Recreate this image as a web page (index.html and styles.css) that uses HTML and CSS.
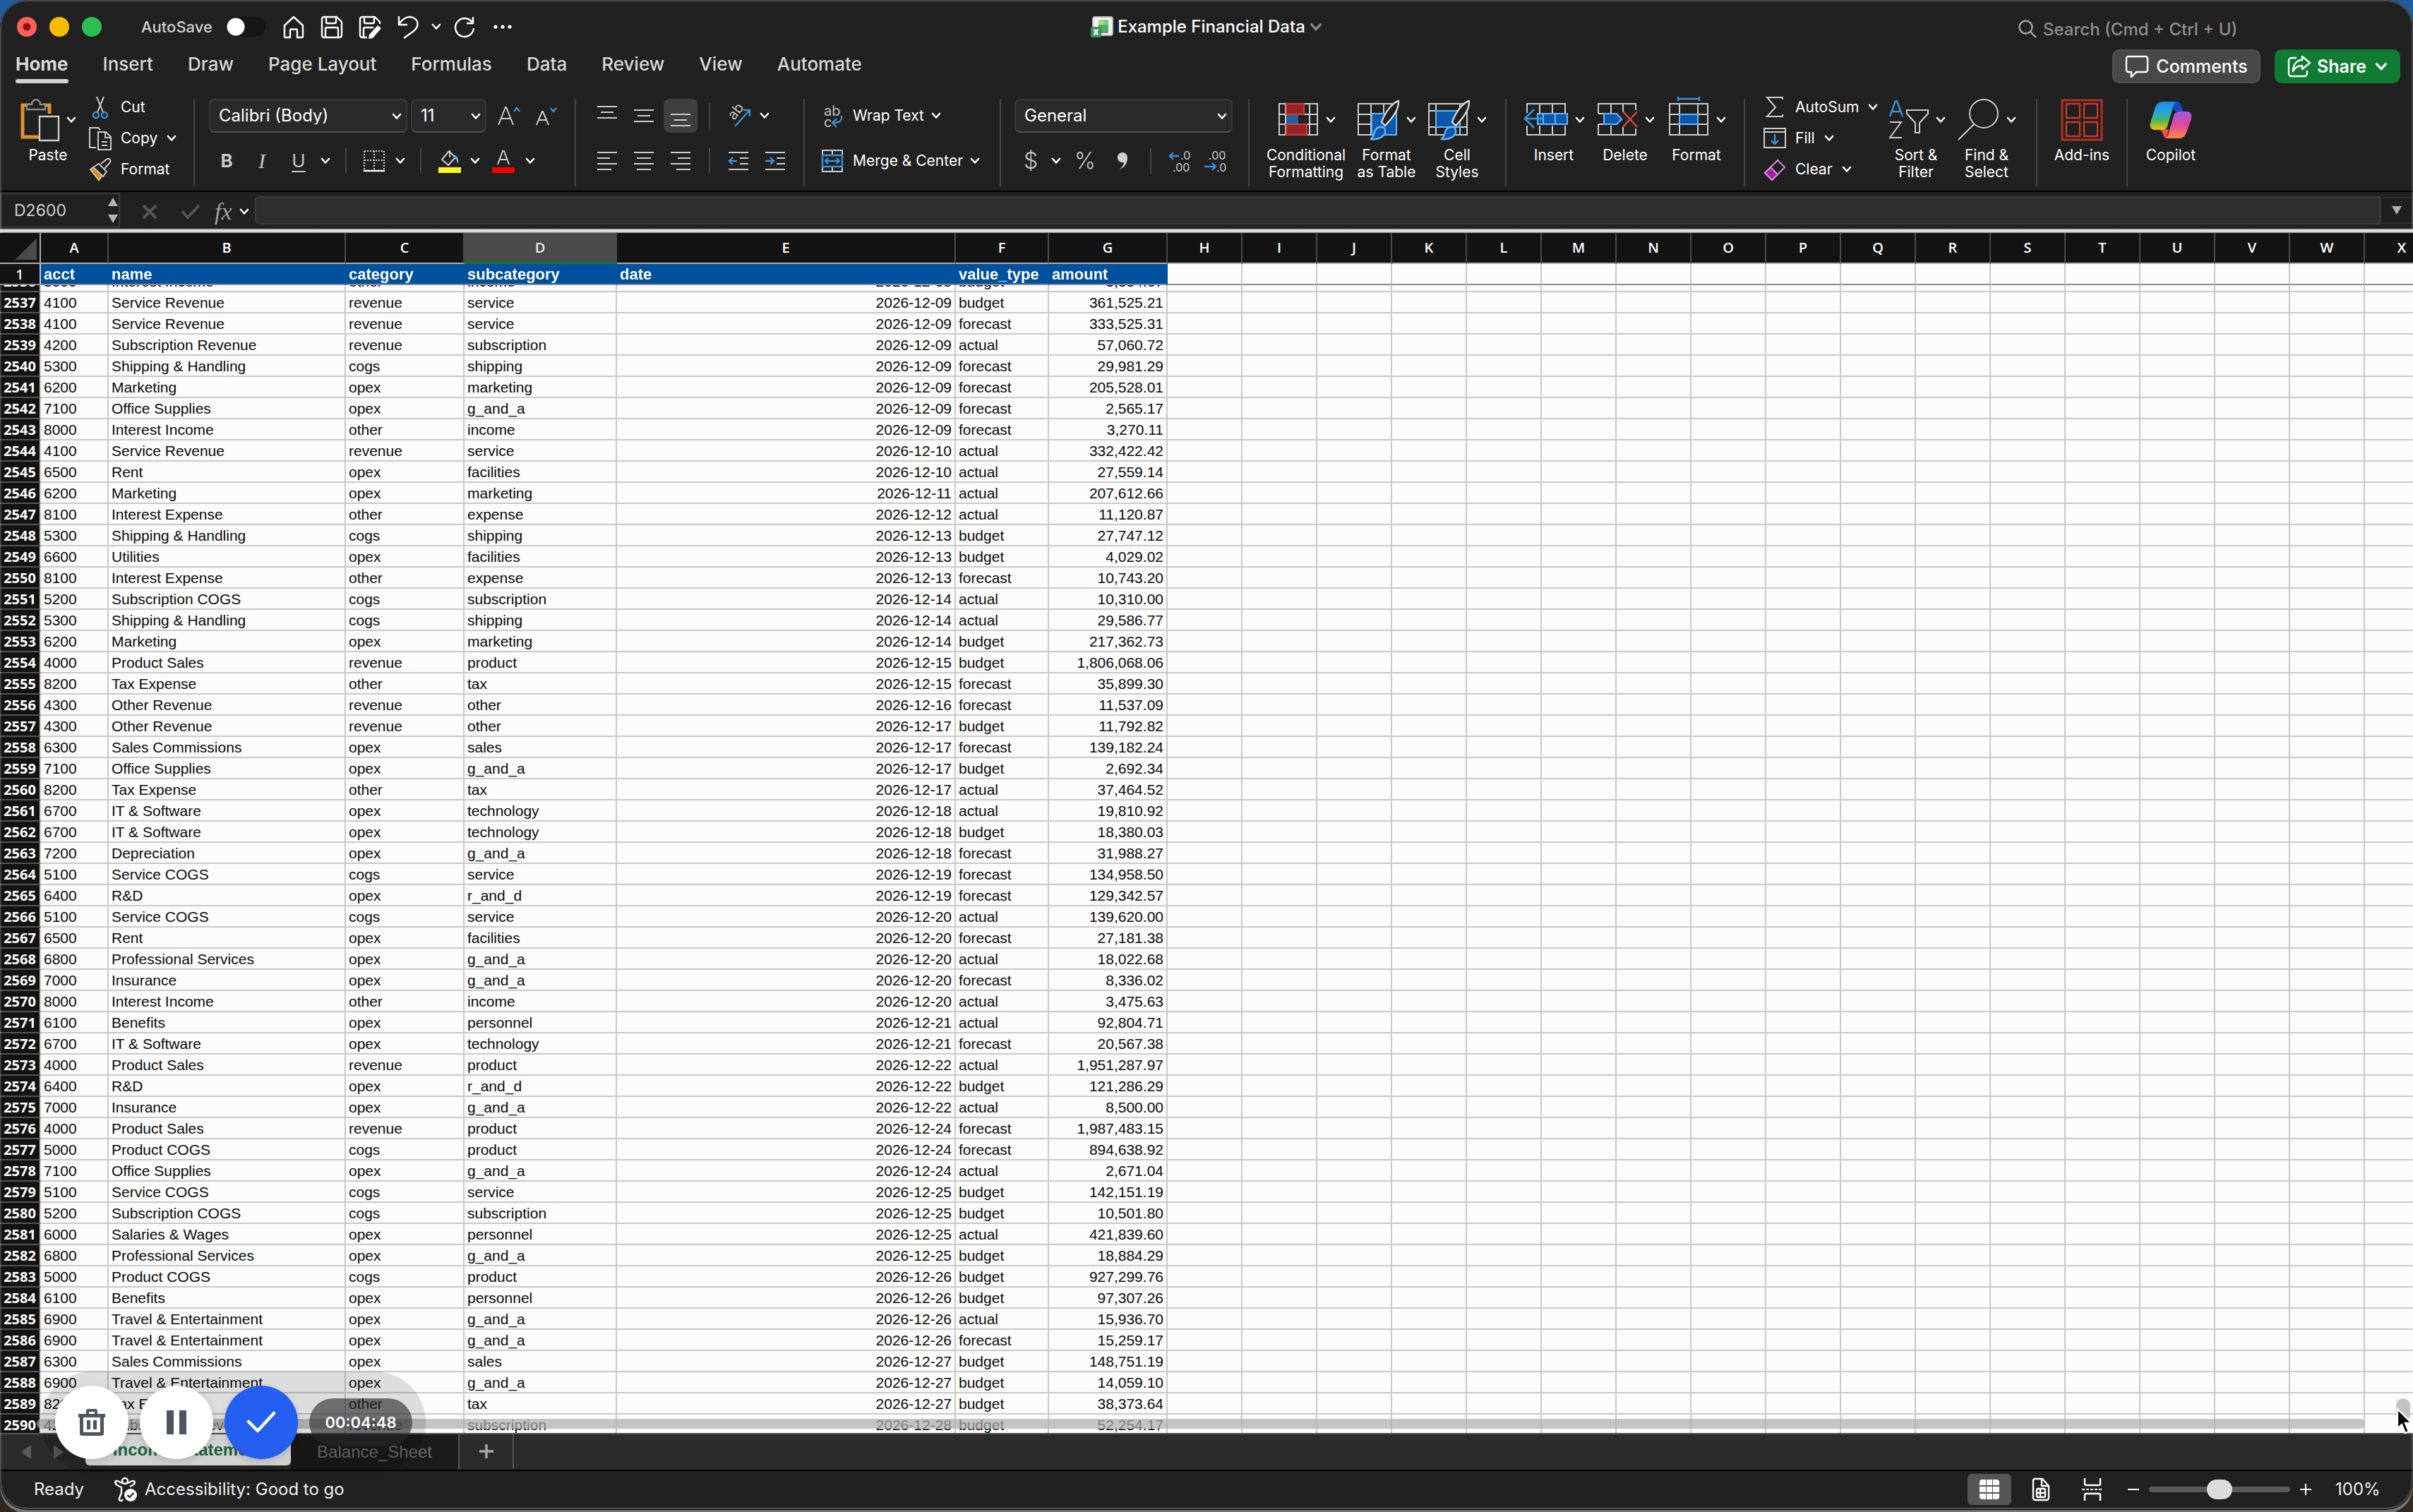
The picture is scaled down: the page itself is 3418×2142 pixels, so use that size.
FILE: index.html
```html
<!DOCTYPE html>
<html lang="en">
<head>
<meta charset="utf-8">
<title>Example Financial Data</title>
<link rel="stylesheet" href="styles.css">
</head>
<body>
<svg class="defs" aria-hidden="true">
  <symbol id="chev" viewBox="0 0 14 10"><path d="M2 2l5 5.500 5-5.500" fill="none" stroke="currentColor" stroke-width="2.600" stroke-linecap="round" stroke-linejoin="round"/></symbol>
  <symbol id="brush" viewBox="0 0 46 60">
    <path d="M44 2c-10 3-20 18-24 30l5 5c8-8 20-22 19-35z" fill="#212121" stroke="#d6d6d6" stroke-width="2.400"/>
    <path d="M4 56c6-2 4-9 8-14 4-5 12-4 13 1 2 8-9 15-21 13z" fill="#0a58ad" stroke="#6db3f2" stroke-width="2.400"/>
  </symbol>
</svg>
<div class="window">
  <header class="titlebar">
    <div class="title-left">
      <div class="lights">
        <button class="light red" aria-label="Close"></button>
        <button class="light yellow" aria-label="Minimize"></button>
        <button class="light green" aria-label="Zoom"></button>
      </div>
      <label class="autosave"><span>AutoSave</span><input type="checkbox"></label>
      <div class="quick">
        <button aria-label="Home"><svg width="32" height="34" viewBox="0 0 32 34"><path d="M3 15L16 3l13 12v15.500a1.500 1.500 0 0 1-1.500 1.500H21V21.500a1 1 0 0 0-1-1h-8a1 1 0 0 0-1 1V32H4.500A1.500 1.500 0 0 1 3 30.500z" class="w"/></svg></button>
        <button aria-label="Save"><svg width="32" height="34" viewBox="0 0 32 34"><path d="M2 6a3 3 0 0 1 3-3h18l7 7v19a3 3 0 0 1-3 3H5a3 3 0 0 1-3-3zM8 3v7a2 2 0 0 0 2 2h10a2 2 0 0 0 2-2V3M7 32V20a2 2 0 0 1 2-2h14a2 2 0 0 1 2 2v12" class="w"/></svg></button>
        <button aria-label="Save a copy"><svg width="32" height="34" viewBox="0 0 32 34"><path d="M12 32H5a3 3 0 0 1-3-3V6a3 3 0 0 1 3-3h18l7 7v3M8 3v7a2 2 0 0 0 2 2h10a2 2 0 0 0 2-2V3M7 32V20a2 2 0 0 1 2-2h12" class="w"/><path d="M27 15l5 4-12 14-6 1 1-6z" fill="#fff"/></svg></button>
        <button aria-label="Undo"><svg width="32" height="34" viewBox="0 0 32 34"><path d="M3 2v12h12M3 14C8 5 16 1 23 4c9 4 8 13 1 19L10 33" class="w"/></svg></button>
        <button aria-label="Undo options" class="slim"><svg class="chev"><use href="#chev"/></svg></button>
        <button aria-label="Redo"><svg width="32" height="34" viewBox="0 0 32 34"><path d="M28 3v9h-9M27 11A13 13 0 1 0 29 19" class="w"/></svg></button>
        <button aria-label="More"><svg width="32" height="34" viewBox="0 0 32 34"><g fill="#fff"><circle cx="6" cy="17" r="2.600"/><circle cx="16" cy="17" r="2.600"/><circle cx="26" cy="17" r="2.600"/></g></svg></button>
      </div>
    </div>
    <button class="doc-title">
      <svg width="32" height="30" viewBox="0 0 32 30"><rect x="3" y="1" width="28" height="26" rx="3" fill="#f4f4f4" stroke="#bdbdbd" stroke-width="2"/><rect x="11" y="5" width="14" height="19" fill="#4fae6c"/><rect x="11" y="5" width="7" height="7" fill="#a5e07b"/><rect x="18" y="5" width="7" height="7" fill="#6fd08a"/><rect x="0" y="15" width="15" height="15" rx="2" fill="#3f8f60"/><path d="M4.500 18.500l6 8M10.500 18.500l-6 8" stroke="#fff" stroke-width="2.400"/></svg>
      <span>Example Financial Data</span>
      <svg class="chev dim big-chev"><use href="#chev"/></svg>
    </button>
    <div class="title-right">
      <label class="search">
        <svg width="28" height="28" viewBox="0 0 28 28"><circle cx="11.500" cy="11.500" r="9" fill="none" stroke="#a8a8a8" stroke-width="2.400"/><path d="M18 18l8 8" stroke="#a8a8a8" stroke-width="2.400"/></svg>
        <input type="text" placeholder="Search (Cmd + Ctrl + U)" aria-label="Search">
      </label>
    </div>
  </header>

  <div class="tabrow">
    <nav class="tabs">
      <a href="#" class="on">Home</a><a href="#">Insert</a><a href="#">Draw</a><a href="#">Page Layout</a><a href="#">Formulas</a><a href="#">Data</a><a href="#">Review</a><a href="#">View</a><a href="#">Automate</a>
    </nav>
    <div class="actions">
      <button class="comments"><svg width="34" height="32" viewBox="0 0 34 32"><path d="M5 2h24a3 3 0 0 1 3 3v16a3 3 0 0 1-3 3H16l-7 7v-7H5a3 3 0 0 1-3-3V5a3 3 0 0 1 3-3z" class="w"/></svg>Comments</button>
      <button class="share"><svg width="34" height="32" viewBox="0 0 34 32"><path d="M13 4H6a4 4 0 0 0-4 4v18a4 4 0 0 0 4 4h18a4 4 0 0 0 4-4v-4" class="w"/><path d="M21 2l11 9-11 9v-5c-6 0-10 2-13 8 0-9 5-16 13-16z" class="w"/></svg>Share<svg class="chev big-chev"><use href="#chev"/></svg></button>
    </div>
  </div>

  <div class="ribbon">
    <section class="group g1">
      <button class="big">
        <span class="pic"><svg width="56" height="60" viewBox="0 0 56 60"><path d="M14 9H3v45h23M32 9h9v12" fill="none" stroke="#e0912f" stroke-width="5"/><path d="M9 15V8h7c0-9 12-9 12 0h7v7z" fill="#212121" stroke="#8c8c8c" stroke-width="2.400"/><path d="M27 25h27v34H27z" fill="#212121" stroke="#cfcfcf" stroke-width="2.400"/></svg><svg class="chev"><use href="#chev"/></svg></span>
        <span>Paste</span>
      </button>
      <div class="list">
        <button><svg width="32" height="34" viewBox="0 0 32 34"><path d="M11 2l9 22M21 2l-9 22" stroke="#c8c8c8" stroke-width="2" fill="none"/><circle cx="10" cy="28" r="4" class="b"/><circle cx="22" cy="28" r="4" class="b"/></svg>Cut</button>
        <button><svg width="32" height="34" viewBox="0 0 32 34"><path d="M10 30H1V2h12l3 3" class="g"/><path d="M13 8h11l7 7v18H13zM23 8v8h8M18 22h8M18 27h8" class="g"/></svg>Copy<svg class="chev"><use href="#chev"/></svg></button>
        <button><svg width="32" height="34" viewBox="0 0 32 34"><path d="M2 17l11-7 10 10-9 12z" fill="#d9872b" stroke="#f0c878" stroke-width="2"/><path d="M6 14l8-5 11 11-5 7z" fill="#212121" stroke="#c8c8c8" stroke-width="2"/><path d="M17 9l9-7c4-1 6 3 3 6l-7 8" fill="#212121" stroke="#c8c8c8" stroke-width="2"/></svg>Format</button>
      </div>
    </section>

    <section class="group g2">
      <div class="line font-line">
        <span class="drop family"><select aria-label="Font"><option>Calibri (Body)</option></select><svg class="chev"><use href="#chev"/></svg></span>
        <span class="drop size"><select aria-label="Font size"><option>11</option></select><svg class="chev"><use href="#chev"/></svg></span>
        <button aria-label="Increase font size" class="wide"><svg width="36" height="30" viewBox="0 0 36 30"><path d="M2 28L12 3h1l10 25M6 19h13" class="g"/><path d="M24 9l4-5 4 5" class="b"/></svg></button>
        <button aria-label="Decrease font size" class="wide"><svg width="36" height="30" viewBox="0 0 36 30"><path d="M4 28L12 9h1l8 19M7 21h11" class="g"/><path d="M24 4l4 5 4-5" class="b"/></svg></button>
      </div>
      <div class="line cells c2">
        <button class="glyph bold">B</button>
        <button class="glyph ital">I</button>
        <button class="glyph under">U</button>
        <button aria-label="Underline options"><svg class="chev"><use href="#chev"/></svg></button>
        <i class="sep"></i>
        <button aria-label="Borders"><svg width="32" height="32" viewBox="0 0 32 32"><path d="M2 2h28v26M2 2v26M16 2v26M2 15h28" fill="none" stroke="#d0d0d0" stroke-width="2" stroke-dasharray="2 2"/><path d="M1 30h30" stroke="#fff" stroke-width="2.400"/></svg></button>
        <button aria-label="Border options"><svg class="chev"><use href="#chev"/></svg></button>
        <i class="sep"></i>
        <button aria-label="Fill color"><svg width="34" height="34" viewBox="0 0 34 34"><path d="M17 2v10M16 3L6 15l9 8 10-11-9-9" class="g"/><path d="M24 9c5 1 6 7 5 12-2-2-2-6-5-8" fill="#6aa9dc"/><path d="M1 26h32v8H1z" fill="#fdfd1c"/></svg></button>
        <button aria-label="Fill color options"><svg class="chev"><use href="#chev"/></svg></button>
        <button aria-label="Font color"><svg width="34" height="34" viewBox="0 0 34 34"><path d="M9 22l7-19h2l7 19M11 15h12" class="g"/><path d="M1 26h32v8H1z" fill="#f60000"/></svg></button>
        <button aria-label="Font color options"><svg class="chev"><use href="#chev"/></svg></button>
      </div>
    </section>

    <section class="group g3">
      <div class="line cells c3">
        <button aria-label="Top align"><svg width="28" height="30" viewBox="0 0 28 30"><path d="M0 2h28M5 10h18M0 18h28" class="g"/></svg></button>
        <button aria-label="Middle align"><svg width="28" height="30" viewBox="0 0 28 30"><path d="M0 7h28M5 15h18M0 23h28" class="g"/></svg></button>
        <button aria-label="Bottom align" class="pressed"><svg width="28" height="30" viewBox="0 0 28 30"><path d="M0 13h28M5 21h18M0 29h28" class="g"/></svg></button>
        <i class="sep"></i>
        <button aria-label="Orientation"><svg width="34" height="34" viewBox="0 0 34 34"><text x="0" y="0" transform="translate(11 24) rotate(-52)" class="mini">ab</text><path d="M12 32L32 10M24 9h9v9" class="b"/></svg></button>
        <button aria-label="Orientation options" class="start"><svg class="chev"><use href="#chev"/></svg></button>
      </div>
      <div class="line cells c3">
        <button aria-label="Align left"><svg width="28" height="28" viewBox="0 0 28 28"><path d="M0 2h28M0 10h18M0 18h28M0 26h20" class="g"/></svg></button>
        <button aria-label="Center"><svg width="28" height="28" viewBox="0 0 28 28"><path d="M0 2h28M4 10h20M0 18h28M4 26h20" class="g"/></svg></button>
        <button aria-label="Align right"><svg width="28" height="28" viewBox="0 0 28 28"><path d="M0 2h28M10 10h18M0 18h28M8 26h20" class="g"/></svg></button>
        <i class="sep"></i>
        <button aria-label="Decrease indent"><svg width="28" height="28" viewBox="0 0 28 28"><path d="M0 2h28M16 10h12M16 18h12M0 26h28" class="g"/><path d="M12 14H1M6 9l-5 5 5 5" class="b"/></svg></button>
        <button aria-label="Increase indent"><svg width="28" height="28" viewBox="0 0 28 28"><path d="M0 2h28M16 10h12M16 18h12M0 26h28" class="g"/><path d="M0 14h11M7 9l5 5-5 5" class="b"/></svg></button>
      </div>
    </section>

    <section class="group g4">
      <div class="line"><button class="text"><svg width="30" height="34" viewBox="0 0 30 34"><text x="3" y="17" class="mini">ab</text><text x="3" y="33" class="mini">c</text><path d="M28 17c1 8-4 10-13 10M21 21l-6 6 6 6" class="b"/></svg>Wrap Text<svg class="chev"><use href="#chev"/></svg></button></div>
      <div class="line"><button class="text"><svg width="30" height="32" viewBox="0 0 30 32"><path d="M1 8V1h28v7M15 1v7M1 24v7h28v-7M15 24v7" class="g"/><path d="M1 8h28v16H1zM5 16h20M9 12l-4 4 4 4M21 12l4 4-4 4" class="b"/></svg>Merge &amp; Center<svg class="chev"><use href="#chev"/></svg></button></div>
    </section>

    <section class="group g5">
      <div class="line"><span class="drop general"><select aria-label="Number format"><option>General</option></select><svg class="chev"><use href="#chev"/></svg></span></div>
      <div class="line cells c5">
        <button class="glyph num-tool">$</button>
        <button aria-label="Currency options"><svg class="chev"><use href="#chev"/></svg></button>
        <button class="glyph num-tool">%</button>
        <button aria-label="Comma style"><svg width="16" height="26" viewBox="0 0 16 26"><path d="M8 1c5 0 7 4 7 8 0 7-4 13-11 16 4-4 6-7 6-10-5 1-9-2-9-7 0-4 3-7 7-7z" fill="#d0d0d0"/></svg></button>
        <i class="sep"></i>
        <button aria-label="Increase decimal"><svg width="34" height="34" viewBox="0 0 34 34"><text x="18" y="15" class="dec">.0</text><text x="7" y="32" class="dec">.00</text><path d="M16 10H3M8 5l-5 5 5 5" class="b"/></svg></button>
        <button aria-label="Decrease decimal"><svg width="34" height="34" viewBox="0 0 34 34"><text x="7" y="15" class="dec">.00</text><text x="18" y="32" class="dec">.0</text><path d="M1 25h15M12 20l5 5-5 5" class="b"/></svg></button>
      </div>
    </section>

    <section class="group g6">
      <button class="big"><span class="pic"><svg width="60" height="60" viewBox="0 0 60 60"><path d="M3 7h54v44H3zM12 7v44M46 7v44M3 22h54M3 36h54" class="g"/><path d="M13 7h25v15H13zM13 36h29v15H13z" fill="#982324" stroke="#d0413f" stroke-width="2"/><path d="M13 23h17v12H13z" fill="#1f61a3"/></svg><svg class="chev"><use href="#chev"/></svg></span><span>Conditional<br>Formatting</span></button>
      <button class="big"><span class="pic"><svg width="60" height="60" viewBox="0 0 60 60"><path d="M1 7h54v44H1zM19 7v44M37 7v44M1 22h54M1 36h54" class="g"/><path d="M20 21h35v30H20z" fill="#0a58ad" stroke="#6db3f2" stroke-width="2"/><use href="#brush" x="14" y="1" width="46" height="60"/></svg><svg class="chev"><use href="#chev"/></svg></span><span>Format<br>as Table</span></button>
      <button class="big"><span class="pic"><svg width="60" height="60" viewBox="0 0 60 60"><path d="M1 7h54v44H1zM11 7v44M45 7v44M1 17h54M1 40h54" class="g"/><path d="M11 17h34v23H11z" fill="#0a58ad" stroke="#6db3f2" stroke-width="2"/><use href="#brush" x="14" y="1" width="46" height="60"/></svg><svg class="chev"><use href="#chev"/></svg></span><span>Cell<br>Styles</span></button>
    </section>

    <section class="group g7">
      <button class="big"><span class="pic"><svg width="64" height="60" viewBox="0 0 64 60"><path d="M5 20V7h54v14M5 38v13h54V38M23 7v14M41 7v14M23 38v13M41 38v13" class="g"/><path d="M20 21h42v15H20zM28 21v15M45 21v15" fill="#0a58ad" stroke="#6db3f2" stroke-width="2"/><path d="M28 28H3M15 15L2 28l13 13" fill="none" stroke="#3b92d8" stroke-width="2.600"/></svg><svg class="chev"><use href="#chev"/></svg></span><span>Insert</span></button>
      <button class="big"><span class="pic"><svg width="60" height="60" viewBox="0 0 60 60"><path d="M3 21V7h53v9M3 21h8M3 36v15h53v-9M3 36h8M21 7v14M38 7v12M21 38v13M38 40v11" class="g"/><path d="M11 21h18l7 8-7 7H11z" fill="#0a58ad" stroke="#6db3f2" stroke-width="2"/><path d="M38 18l20 22M58 18L38 40" stroke="#d9443f" stroke-width="2.600"/></svg><svg class="chev"><use href="#chev"/></svg></span><span>Delete</span></button>
      <button class="big"><span class="pic"><svg width="60" height="68" viewBox="0 0 60 68"><path d="M3 11h54v44H3zM17 11v44M43 11v44M3 26h54M3 40h54" class="g"/><path d="M17 26h26v14H17z" fill="#0a58ad" stroke="#6db3f2" stroke-width="2"/><path d="M15 4h30M15 1v6M45 1v6" class="b"/></svg><svg class="chev"><use href="#chev"/></svg></span><span>Format</span></button>
    </section>

    <section class="group g8">
      <div class="list">
        <button><svg width="32" height="34" viewBox="0 0 32 34"><path d="M27 6V3H5l12 14L5 30h22v-3" class="g"/></svg>AutoSum<svg class="chev"><use href="#chev"/></svg></button>
        <button><svg width="32" height="34" viewBox="0 0 32 34"><path d="M1 3h30v27H1zM1 8h30" class="g"/><path d="M16 11v14M11 20l5 5 5-5" class="b"/></svg>Fill<svg class="chev"><use href="#chev"/></svg></button>
        <button><svg width="32" height="34" viewBox="0 0 32 34"><path d="M2 22l18-18 10 10-18 18z" fill="none" stroke="#c98fd0" stroke-width="2"/><path d="M2 22l8-8 10 10-8 8z" fill="#a3219f" stroke="#df8ae0" stroke-width="2"/></svg>Clear<svg class="chev"><use href="#chev"/></svg></button>
      </div>
      <button class="big"><span class="pic"><svg width="60" height="60" viewBox="0 0 60 60"><path d="M4 25L12 3h2l8 22M7 18h12" class="b"/><path d="M4 33h16L4 55h17" class="g"/><path d="M28 16h30v5L46 34v14h-6V34L28 21z" class="g"/></svg><svg class="chev"><use href="#chev"/></svg></span><span>Sort &amp;<br>Filter</span></button>
      <button class="big"><span class="pic"><svg width="60" height="60" viewBox="0 0 60 60"><circle cx="37" cy="21" r="20" class="g"/><path d="M23 36L1 58" class="g"/></svg><svg class="chev"><use href="#chev"/></svg></span><span>Find &amp;<br>Select</span></button>
    </section>

    <section class="group g9">
      <button class="big"><span class="pic"><svg width="60" height="60" viewBox="0 0 60 60"><path d="M2 2h56v56H2z" fill="none" stroke="#b03422" stroke-width="3"/><path d="M8 7h19v20H8zM33 7h19v20H33zM8 33h19v20H8zM33 33h19v20H33z" fill="none" stroke="#c93a24" stroke-width="2.400"/></svg></span><span>Add-ins</span></button>
    </section>

    <section class="group g10">
      <button class="big"><span class="pic"><svg width="60" height="60" viewBox="0 0 60 60">
        <defs>
          <linearGradient id="cpa" x1="0" y1="0" x2="0" y2="1"><stop offset="0" stop-color="#1a8ee8"/><stop offset=".4" stop-color="#2aa6d8"/><stop offset=".65" stop-color="#45b85a"/><stop offset="1" stop-color="#f4c20c"/></linearGradient>
          <linearGradient id="cpb" x1="0" y1="0" x2="0" y2="1"><stop offset="0" stop-color="#a25be0"/><stop offset=".5" stop-color="#e0489a"/><stop offset="1" stop-color="#fb8a4c"/></linearGradient>
        </defs>
        <path d="M30 4h9c4 0 5 3 6 6l3 8H36z" fill="#1748c0"/>
        <path d="M15 43h12l-3 13c-3 0-4-3-5-6z" fill="#f0503c"/>
        <path d="M18 4h20c-3 1-4 4-5 8l-7 24c-1 5-4 8-8 8H8c-7 0-8-5-7-10l7-22c2-5 5-8 10-8z" fill="url(#cpa)"/>
        <path d="M42 56H22c3-1 4-4 5-8l7-24c1-4 4-6 8-6h10c7 0 8 5 7 10l-7 20c-2 5-5 8-10 8z" fill="url(#cpb)"/>
      </svg></span><span>Copilot</span></button>
    </section>
  </div>

  <div class="formula">
    <div class="namebox"><input type="text" value="D2600" aria-label="Name box"><svg width="16" height="36" viewBox="0 0 16 36"><path d="M8 0l7 12H1zM8 36l7-12H1z" fill="#b5b5b5"/></svg></div>
    <div class="fxtools">
      <button aria-label="Cancel"><svg width="24" height="24" viewBox="0 0 24 24"><path d="M3 3l18 18M21 3L3 21" stroke="#555" stroke-width="4"/></svg></button>
      <button aria-label="Enter"><svg width="28" height="24" viewBox="0 0 28 24"><path d="M2 11l8 9L26 3" fill="none" stroke="#555" stroke-width="4"/></svg></button>
      <button class="fx">fx</button>
      <button aria-label="Function options" class="tight"><svg class="chev"><use href="#chev"/></svg></button>
    </div>
    <input class="fxinput" type="text" aria-label="Formula bar">
    <button class="expand" aria-label="Expand formula bar"><svg width="14" height="12" viewBox="0 0 14 12"><path d="M0 0h14L7 12z" fill="#b0b0b0"/></svg></button>
  </div>
  <div class="band"></div>

  <main class="sheet">
    <div class="pane" id="pane">
      <table>
        <colgroup id="cols"></colgroup>
        <thead id="head"></thead>
        <tbody id="rows"></tbody>
      </table>
    </div>
    <div class="hbar"></div>
    <div class="vbar"></div>
    <svg class="pointer" width="26" height="40" viewBox="0 0 26 40"><path d="M4 2v28l6-6 5 12 5-2-5-12h9z" fill="#000" stroke="#fff" stroke-width="2.400"/></svg>
  </main>

  <footer class="sheetbar">
    <div class="sheet-steps">
      <button aria-label="Previous sheet"><svg width="14" height="20" viewBox="0 0 14 20"><path d="M14 0v20L0 10z" fill="#5a5a5a"/></svg></button>
      <button aria-label="Next sheet"><svg width="14" height="20" viewBox="0 0 14 20"><path d="M0 0v20l14-10z" fill="#5a5a5a"/></svg></button>
    </div>
    <button class="stab on">Income_Statement</button>
    <button class="stab">Balance_Sheet</button>
    <button class="add" aria-label="Add sheet"><svg width="20" height="20" viewBox="0 0 20 20"><path d="M10 0v20M0 10h20" stroke="#a8a8a8" stroke-width="3.400"/></svg></button>
  </footer>

  <footer class="status">
    <span class="ready">Ready</span>
    <button class="access"><svg width="32" height="36" viewBox="0 0 32 36"><circle cx="15" cy="6" r="4" class="w"/><path d="M12 9C8 9 6 5 3 6s-2 4 1 6l6 3v8c-1 4-4 7-3 10 2 2 4 1 5-1M18 9c4 0 6-4 9-3s2 4-1 6l-4 2" class="w"/><circle cx="23" cy="26" r="9" fill="#fff"/><path d="M18.500 26l3 3 6-6" fill="none" stroke="#212121" stroke-width="2.200"/></svg>Accessibility: Good to go</button>
    <div class="views">
      <button class="view on" aria-label="Normal view"><svg width="28" height="28" viewBox="0 0 28 28"><path d="M4 0h5v8H0V4a4 4 0 0 1 4-4zM10 0h8v8h-8zM19 0h5a4 4 0 0 1 4 4v4h-9zM0 10h9v8H0zM10 10h8v8h-8zM19 10h9v8h-9zM0 20h9v8H4a4 4 0 0 1-4-4zM10 20h8v8h-8zM19 20h9v4a4 4 0 0 1-4 4h-5z" fill="#fff"/></svg></button>
      <button class="view" aria-label="Page layout view"><svg width="26" height="34" viewBox="0 0 26 34"><path d="M4 2h11l9 10v17a3 3 0 0 1-3 3H5a3 3 0 0 1-3-3V5a3 3 0 0 1 2-3zM14 2v10h10" class="w"/><path d="M9 16h8a2 2 0 0 1 2 2v8a2 2 0 0 1-2 2H9a2 2 0 0 1-2-2v-8a2 2 0 0 1 2-2zM7 22h12M12 16v12" class="w"/></svg></button>
      <button class="view" aria-label="Page break view"><svg width="30" height="34" viewBox="0 0 30 34"><path d="M4 1v8a2 2 0 0 0 2 2h18a2 2 0 0 0 2-2V1M4 33v-8a2 2 0 0 1 2-2h18a2 2 0 0 1 2 2v8" class="w"/><path d="M0 17h30" stroke="#fff" stroke-width="2" stroke-dasharray="4 2"/></svg></button>
    </div>
    <div class="zoomer">
      <button aria-label="Zoom out"><svg width="16" height="16" viewBox="0 0 16 16"><path d="M0 8h16" stroke="#fff" stroke-width="2"/></svg></button>
      <input type="range" min="0" max="100" value="50" aria-label="Zoom">
      <button aria-label="Zoom in"><svg width="16" height="16" viewBox="0 0 16 16"><path d="M0 8h16M8 0v16" stroke="#fff" stroke-width="2"/></svg></button>
      <span class="pct">100%</span>
    </div>
  </footer>

  <div class="recorder">
    <button class="round" aria-label="Delete recording"><svg width="38" height="38" viewBox="0 0 38 38"><path d="M0 7h11V3a3 3 0 0 1 3-3h10a3 3 0 0 1 3 3v4h11v5h-2v23a3 3 0 0 1-3 3H5a3 3 0 0 1-3-3V12H0zM15 4v3h8V4zM7 12v21h24V12z" fill="#4d5561" fill-rule="evenodd"/><path d="M12 16h5v13h-5zM21 16h5v13h-5z" fill="#4d5561"/></svg></button>
    <button class="round" aria-label="Pause recording"><svg width="30" height="34" viewBox="0 0 30 34"><path d="M1 0h10v34H1zM19 0h10v34H19z" fill="#4d5561"/></svg></button>
    <button class="round done" aria-label="Finish recording"><svg width="42" height="32" viewBox="0 0 42 32"><path d="M3 15l13 13L39 3" fill="none" stroke="#fff" stroke-width="4.500" stroke-linecap="round" stroke-linejoin="round"/></svg></button>
    <span class="timer">00:04:48</span>
  </div>
</div>
<script src="sheet.js"></script>
</body>
</html>
```

FILE: sheet.js
```js
// Account code -> name, category, subcategory
const accounts = {
  4000: ["Product Sales", "revenue", "product"],
  4100: ["Service Revenue", "revenue", "service"],
  4200: ["Subscription Revenue", "revenue", "subscription"],
  4300: ["Other Revenue", "revenue", "other"],
  5000: ["Product COGS", "cogs", "product"],
  5100: ["Service COGS", "cogs", "service"],
  5200: ["Subscription COGS", "cogs", "subscription"],
  5300: ["Shipping & Handling", "cogs", "shipping"],
  6000: ["Salaries & Wages", "opex", "personnel"],
  6100: ["Benefits", "opex", "personnel"],
  6200: ["Marketing", "opex", "marketing"],
  6300: ["Sales Commissions", "opex", "sales"],
  6400: ["R&D", "opex", "r_and_d"],
  6500: ["Rent", "opex", "facilities"],
  6600: ["Utilities", "opex", "facilities"],
  6700: ["IT & Software", "opex", "technology"],
  6800: ["Professional Services", "opex", "g_and_a"],
  6900: ["Travel & Entertainment", "opex", "g_and_a"],
  7000: ["Insurance", "opex", "g_and_a"],
  7100: ["Office Supplies", "opex", "g_and_a"],
  7200: ["Depreciation", "opex", "g_and_a"],
  8000: ["Interest Income", "other", "income"],
  8100: ["Interest Expense", "other", "expense"],
  8200: ["Tax Expense", "other", "tax"]
};

// account, day of December 2026, value type, amount
const firstRow = 2536;
const entries = `8000 08 budget 3,354.67
4100 09 budget 361,525.21
4100 09 forecast 333,525.31
4200 09 actual 57,060.72
5300 09 forecast 29,981.29
6200 09 forecast 205,528.01
7100 09 forecast 2,565.17
8000 09 forecast 3,270.11
4100 10 actual 332,422.42
6500 10 actual 27,559.14
6200 11 actual 207,612.66
8100 12 actual 11,120.87
5300 13 budget 27,747.12
6600 13 budget 4,029.02
8100 13 forecast 10,743.20
5200 14 actual 10,310.00
5300 14 actual 29,586.77
6200 14 budget 217,362.73
4000 15 budget 1,806,068.06
8200 15 forecast 35,899.30
4300 16 forecast 11,537.09
4300 17 budget 11,792.82
6300 17 forecast 139,182.24
7100 17 budget 2,692.34
8200 17 actual 37,464.52
6700 18 actual 19,810.92
6700 18 budget 18,380.03
7200 18 forecast 31,988.27
5100 19 forecast 134,958.50
6400 19 forecast 129,342.57
5100 20 actual 139,620.00
6500 20 forecast 27,181.38
6800 20 actual 18,022.68
7000 20 forecast 8,336.02
8000 20 actual 3,475.63
6100 21 actual 92,804.71
6700 21 forecast 20,567.38
4000 22 actual 1,951,287.97
6400 22 budget 121,286.29
7000 22 actual 8,500.00
4000 24 forecast 1,987,483.15
5000 24 forecast 894,638.92
7100 24 actual 2,671.04
5100 25 budget 142,151.19
5200 25 budget 10,501.80
6000 25 actual 421,839.60
6800 25 budget 18,884.29
5000 26 budget 927,299.76
6100 26 budget 97,307.26
6900 26 actual 15,936.70
6900 26 forecast 15,259.17
6300 27 budget 148,751.19
6900 27 budget 14,059.10
8200 27 budget 38,373.64
4200 28 budget 52,254.17`.split("\n").map(line => line.split(" "));

const letters = "ABCDEFGHIJKLMNOPQRSTUVWXYZ".split("");
const headings = ["acct", "name", "category", "subcategory", "date", "value_type", "amount"];
const empty = letters.length - headings.length;
const esc = s => s.replace(/&/g, "&amp;");

document.getElementById("cols").innerHTML =
  '<col class="w-num">' + letters.map(l => `<col class="w-${"ABCDEFG".includes(l) ? l.toLowerCase() : "x"}">`).join("");

document.getElementById("head").innerHTML =
  '<tr class="letters"><th class="corner"></th>' +
  letters.map(l => `<th scope="col"${l === "D" ? ' class="sel"' : ""}>${l}</th>`).join("") + "</tr>" +
  '<tr class="titles"><th class="num">1</th>' +
  headings.map(h => `<th scope="col" class="title">${h}</th>`).join("") +
  "<td></td>".repeat(empty) + "</tr>";

document.getElementById("rows").innerHTML = entries.map(([code, day, type, amount], i) => {
  const [name, category, sub] = accounts[code];
  return `<tr><th scope="row" class="num">${firstRow + i}</th><td>${code}</td><td>${esc(name)}</td><td>${category}</td><td>${sub}</td>` +
    `<td class="r">2026-12-${day}</td><td>${type}</td><td class="r">${amount}</td>` + "<td></td>".repeat(empty) + "</tr>";
}).join("");

// The sheet is scrolled part-way into its first listed row.
document.getElementById("pane").scrollTop = 20;
```

FILE: styles.css
```css
* { box-sizing: border-box; }

body {
  margin: 0;
  height: 100vh;
  overflow: hidden;
  padding-bottom: 4px;
  background: linear-gradient(#1f5c9c 0 50%, #33291f 50%);
  font: 21px/24px Inter, "Liberation Sans", sans-serif;
  color: #fff;
}

button, input, select {
  font: inherit;
  color: inherit;
  background: none;
  border: 0;
  margin: 0;
  padding: 0;
}

button { display: flex; align-items: center; justify-content: center; }
svg { display: block; flex: none; overflow: visible; }
.defs { position: absolute; width: 0; height: 0; }

.w { fill: none; stroke: #fff; stroke-width: 2.4; stroke-linejoin: round; }
.g { fill: none; stroke: #cdcdcd; stroke-width: 2; }
.b { fill: none; stroke: #3b92d8; stroke-width: 2.4; }
.mini { font: 20px Inter, sans-serif; fill: #c0c0c0; }
.dec { font: 16px Inter, sans-serif; fill: #cdcdcd; }
.chev { width: 14px; height: 10px; }
.big-chev { width: 18px; height: 13px; }
.chev.dim { color: #8a8a8a; }

.window {
  position: relative;
  height: 100%;
  display: flex;
  flex-direction: column;
  overflow: hidden;
  background: #212121;
  border-radius: 38px;
  border-bottom: 2px solid #555;
  box-shadow: 0 1px 0 #000, 0 6px 0 #757575;
}

.window::after {
  content: "";
  position: absolute;
  inset: 0;
  border: 2px solid rgba(255, 255, 255, .18);
  border-bottom: 0;
  border-radius: 38px;
  pointer-events: none;
}

/* Title bar */
.titlebar {
  height: 70px;
  padding-top: 6px;
  display: grid;
  grid-template-columns: 1fr auto 1fr;
  align-items: center;
}

.title-left { display: flex; align-items: center; padding-left: 24px; }
.lights { display: flex; gap: 18px; margin-right: 56px; }
.light { width: 28px; height: 28px; border-radius: 50%; }
.red { background: radial-gradient(circle, #8a1512 0 5px, #fe5f57 6px); }
.yellow { background: #f6bd05; }
.green { background: #2bc04f; }

.autosave { display: flex; align-items: center; width: 176px; justify-content: space-between; font-size: 22px; font-weight: 500; color: #d0d0d0; }
.autosave input {
  appearance: none;
  width: 56px;
  height: 28px;
  border-radius: 14px;
  background: radial-gradient(circle at 14px 14px, #fff 0 12px, transparent 13px), #161616;
}
.quick { display: flex; align-items: center; gap: 22px; margin-left: 24px; }
.quick button { width: 32px; }
.quick .slim { width: 12px; margin: 0 -4px; }

.doc-title { gap: 6px; font-size: 24px; font-weight: 500; }
.title-right { display: flex; justify-content: flex-end; }
.search { display: flex; align-items: center; gap: 8px; width: 560px; padding-top: 6px; }
.search input { flex: 1; min-width: 0; font-size: 24px; font-weight: 500; }
.search input::placeholder { color: #8f8f8f; opacity: 1; }

/* Ribbon tabs */
.tabrow { height: 60px; display: flex; justify-content: space-between; align-items: flex-start; padding: 0 18px 0 22px; }
.tabs { display: flex; gap: 49px; padding-top: 4px; }
.tabs a {
  color: #d8d8d8;
  text-decoration: none;
  font-size: 26px;
  font-weight: 500;
  line-height: 34px;
  padding-bottom: 4px;
  border-bottom: 6px solid transparent;
}
.tabs .on { font-weight: 700; position: relative; }
.tabs .on::after { content: ""; position: absolute; left: 0; right: 0; top: 38px; height: 6px; border-radius: 3px; background: #d4d4d4; }
.actions { display: flex; gap: 20px; }
.actions button { height: 48px; border-radius: 10px; font-size: 25px; font-weight: 500; }
.comments { width: 210px; gap: 10px; background: #484848; border: 2px solid #525252; }
.share { width: 178px; gap: 8px; background: #0f7b33; }
.actions .share { font-weight: 600; }
.share .big-chev { margin-left: 4px; }

/* Ribbon */
.ribbon { display: flex; height: 142px; border-bottom: 2px solid #000; }
.group { flex: none; position: relative; padding-top: 10px; }
.group::after { content: ""; position: absolute; right: 0; top: 10px; bottom: 6px; width: 2px; background: #454545; }
.g1 { width: 276px; padding-left: 14px; display: flex; gap: 4px; }
.g2 { width: 540px; padding-left: 20px; }
.g3 { width: 324px; padding-left: 18px; }
.g4 { width: 278px; padding-left: 24px; }
.g5 { width: 352px; padding-left: 19px; }
.g6 { width: 364px; padding-left: 20px; display: grid; grid-template-columns: 120px 108px 92px; }
.g7 { width: 338px; padding-left: 16px; display: grid; grid-template-columns: 102px 100px 102px; }
.g8 { width: 414px; padding-left: 26px; display: grid; grid-template-columns: 166px 100px 100px; }
.g9 { width: 128px; padding: 10px 2px 0 0; display: grid; }
.g10 { width: 122px; display: grid; }
.g10::after { display: none; }

.big { flex-direction: column; justify-content: flex-start; gap: 8px; width: 100%; }
.g1 .big { width: 108px; }
.pic { display: flex; align-items: center; justify-content: center; gap: 9px; height: 60px; }

.list { margin-top: -10px; }
.list button { height: 44px; gap: 13px; }

.line { height: 48px; display: flex; align-items: center; margin-bottom: 16px; }
.cells { display: grid; justify-items: center; }
.c2 { grid-template-columns: 50px 50px 54px 22px 36px 44px 30px 28px 54px 18px 62px 14px; }
.c3 { grid-template-columns: 52px 52px 52px 30px 52px 52px; }
.c5 { grid-template-columns: 46px 26px 56px 50px 30px 52px 50px; }
.sep { width: 2px; height: 36px; background: #454545; }
.pressed { width: 48px; height: 48px; border-radius: 8px; background: #3f3f3f; }
.start { justify-self: start; padding-left: 4px; }
.wide { width: 52px; }
.size { margin-right: 7px; }
.text { gap: 14px; }
.text .chev { margin-left: -4px; }

.drop { position: relative; height: 48px; }
.drop select {
  appearance: none;
  width: 100%;
  height: 48px;
  padding-left: 12px;
  font-size: 24px;
  background: #2a2a2a;
  border: 2px solid #3a3a3a;
  border-bottom-color: #505050;
  border-radius: 8px;
}
.drop .chev { position: absolute; right: 8px; top: 20px; pointer-events: none; }
.family { width: 281px; margin-right: 5px; }
.size { width: 107px; }
.general { width: 309px; }

.glyph { color: #c8c8c8; font-size: 26px; }
.bold { font-weight: 700; }
.ital { font-family: "Liberation Serif", serif; font-style: italic; font-size: 30px; }
.under { text-decoration: underline; text-underline-offset: 5px; text-decoration-thickness: 2px; }
.num-tool { font-size: 32px; font-weight: 300; }

/* Formula bar */
.formula { height: 52px; display: flex; align-items: center; background: #212121; }
.namebox { width: 170px; height: 50px; display: flex; align-items: center; border: 2px solid #3a3a3a; padding-left: 18px; }
.namebox input { flex: 1; min-width: 0; font-size: 23px; color: #d0d0d0; }
.fxtools { display: flex; align-items: center; width: 191px; padding: 4px 0 0 30px; gap: 32px; }
.fx { font: italic 34px/34px "Liberation Serif", serif; color: #a0a0a0; margin-left: -12px; }
.tight { margin-left: -22px; }
.fxinput { flex: 1; height: 40px; background: #2f2f2f; border: 2px solid #3a3a3a; border-radius: 6px 0 0 6px; }
.expand { width: 46px; height: 38px; border-radius: 4px; border: 1px solid #3a3a3a; background: #1f1f1f; }
.band { height: 6px; background: linear-gradient(#8a8a8a, #f0f0f0 45%, #d0d0d0 70%, #8a8a8a); }

/* Sheet */
.sheet { position: relative; flex: 1; min-height: 0; background: #fcfcfc; }
.pane { height: 100%; overflow: hidden; }
.pane table { width: 100%; table-layout: fixed; border-collapse: separate; border-spacing: 0; font: 21px/26px "Liberation Sans", Arial, sans-serif; color: #0a0a0a; }
.w-num { width: 58px; }
.w-a { width: 96px; }
.w-b { width: 336px; }
.w-c { width: 168px; }
.w-d { width: 216px; }
.w-e { width: 480px; }
.w-f { width: 132px; }
.w-g { width: 168px; }
.w-x { width: 106px; }

.pane td, .pane th { height: 30px; padding: 2px 4px 0; border-right: 2px solid #c9c9c9; border-bottom: 2px solid #c9c9c9; text-align: left; white-space: nowrap; overflow: hidden; }
.pane .r { text-align: right; }
.pane thead { position: sticky; top: 0; z-index: 1; }
.pane .letters th { height: 44px; padding: 0 4px; text-align: center; font: 600 20px/42px "Open Sans", "Noto Sans", sans-serif; color: #fff; background: #131313; border-right-color: #4a4a4a; border-bottom-color: #adadad; }
.pane .letters .sel { background: #4b4b4b; border-right-color: #4b4b4b; border-bottom-color: #1c6b3c; box-shadow: inset 0 -2px 0 #1c6b3c; color: #e8e8e8; }
.pane .letters .corner { border-right-color: #adadad; background: linear-gradient(135deg, transparent 50%, #4b4b4b 50%) 22px 8px / 30px 30px no-repeat #131313; }
.pane .num { padding: 2px 2px 0; text-align: center; font: 700 20px/26px "Open Sans", "Noto Sans", sans-serif; color: #fff; background: #131313; border-bottom-color: #555; }
.pane .titles .num { font-weight: 600; }
.pane .titles td, .pane .titles th { border-bottom-color: #8c8c8c; }
.pane .titles td { background: #fcfcfc; }
.pane .titles .title { background: #0050a0; border-right-color: #0050a0; color: #fff; font-size: 22px; font-weight: 700; }

.hbar { position: absolute; left: 52px; right: 68px; bottom: 6px; height: 14px; border-radius: 7px; background: rgba(172, 172, 172, .7); }
.vbar { position: absolute; right: 4px; bottom: 16px; width: 20px; height: 33px; border-radius: 10px; background: #c2c2c2; }
.pointer { position: absolute; right: 0; bottom: -4px; z-index: 1; }

/* Sheet tabs */
.sheetbar { height: 54px; display: flex; align-items: flex-start; background: #2b2b2b; border-top: 2px solid #555; border-bottom: 2px solid #000; font: 24px/48px "Liberation Sans", Arial, sans-serif; }
.sheet-steps { width: 121px; height: 50px; display: flex; align-items: center; gap: 32px; padding-left: 30px; }
.stab { height: 50px; width: 239px; background: #1b1b1b; color: #6c6c6c; border-right: 2px solid #555; }
.stab.on { width: 291px; height: 44px; background: #f0f0f0; color: #1f7244; font-weight: 700; border: 0; border-radius: 0 0 6px 6px; }
.add { width: 77px; height: 48px; border-right: 2px solid #555; }

/* Status bar */
.status { height: 52px; display: flex; align-items: center; font-size: 24px; padding: 0 44px 0 48px; color: #f0f0f0; }
.ready { width: 114px; }
.access { gap: 11px; }
.views { display: flex; margin-left: auto; gap: 11px; }
.view { width: 62px; height: 44px; border-radius: 6px; }
.view.on { background: #555; }
.zoomer { display: flex; align-items: center; margin-left: 19px; gap: 14px; }
.zoomer input { appearance: none; width: 200px; height: 28px; }
.zoomer input::-webkit-slider-runnable-track { height: 8px; border-radius: 4px; background: #5a5a5a; }
.zoomer input::-webkit-slider-thumb { appearance: none; width: 36px; height: 28px; margin-top: -10px; border-radius: 14px; background: #dcdcdc; }
.pct { width: 66px; margin-left: 20px; }

/* Screen recorder controls float above the window */
.recorder { position: absolute; left: 58px; bottom: 49px; width: 545px; height: 144px; border-radius: 72px; display: flex; align-items: center; gap: 16px; padding: 0 20px; background: rgba(0, 0, 0, .12); }
.round { flex: none; width: 104px; height: 104px; border-radius: 50%; background: #fff; box-shadow: 0 4px 12px rgba(0, 0, 0, .15); }
.done { background: #245ff0; }
.timer { flex: none; width: 146px; height: 68px; border-radius: 34px; background: rgba(40, 42, 45, .62); font-weight: 600; font-size: 22px; line-height: 68px; text-align: center; }
```
